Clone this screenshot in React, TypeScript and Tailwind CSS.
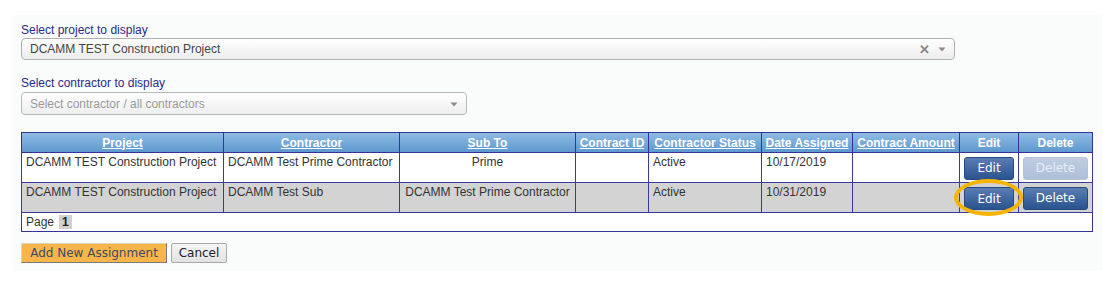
import React from "react";

const cols = [202, 176, 176, 73, 113, 91, 107, 59, 74];
const heads = [
  { t: "Project", u: true },
  { t: "Contractor", u: true },
  { t: "Sub To", u: true },
  { t: "Contract ID", u: true },
  { t: "Contractor Status", u: true },
  { t: "Date Assigned", u: true },
  { t: "Contract Amount", u: true },
  { t: "Edit", u: false },
  { t: "Delete", u: false },
];

function BlueBtn({ label, disabled, w }: { label: string; disabled?: boolean; w: string }) {
  return (
    <button
      className={
        disabled
          ? `${w} h-[23px] rounded-[3px] border border-[#b4c2d8] bg-gradient-to-b from-[#c0cde2] to-[#aebfd9] text-[#e8edf5] text-[12px] font-['DejaVu_Sans',sans-serif]`
          : `${w} h-[23px] rounded-[3px] border border-[#254a80] bg-gradient-to-b from-[#5a7db3] to-[#2a538f] text-white text-[12px] font-['DejaVu_Sans',sans-serif]`
      }
    >
      {label}
    </button>
  );
}

export default function App() {
  const cell = "border border-[#3a3a9a] align-top px-[4px] pt-[2px] text-[12px] leading-[14px] text-[#333]";
  return (
    <div className="w-[1117px] h-[299px] bg-white pt-[15px] pl-[13px] font-['Liberation_Sans',Arial,sans-serif]">
      <div className="w-[1089px] h-[256px] bg-[#fafbfb] pl-[8px] pt-[8px]">
        <div className="text-[12px] leading-[15px] text-[#2a2a8a]">Select project to display</div>
        <div className="w-[934px] h-[22px] rounded-[4px] border border-[#b0b0b0] bg-gradient-to-b from-[#ffffff] to-[#ececec] flex items-center pl-[8px] pr-[8px]">
          <span className="flex-1 text-[12px] text-[#444]">DCAMM TEST Construction Project</span>
          <span className="text-[#888] text-[13px] font-bold leading-none mr-[8px]">✕</span>
          <svg width="8" height="6" viewBox="0 0 8 6"><path d="M0.5 1.5 L7.5 1.5 L4 5.5 Z" fill="#888" /></svg>
        </div>
        <div className="text-[12px] leading-[15px] text-[#2a2a8a] mt-[16px]">Select contractor to display</div>
        <div className="mt-[1px] w-[446px] h-[23px] rounded-[4px] border border-[#b8b8b8] bg-gradient-to-b from-[#ffffff] to-[#eeeeee] flex items-center pl-[8px] pr-[8px]">
          <span className="flex-1 text-[12px] text-[#9a9a9a]">Select contractor / all contractors</span>
          <svg width="8" height="6" viewBox="0 0 8 6"><path d="M0.5 1.5 L7.5 1.5 L4 5.5 Z" fill="#888" /></svg>
        </div>

        <table className="mt-[17px] w-[1071px] table-fixed border-collapse border border-[#333399]">
          <colgroup>
            {cols.map((w, i) => (
              <col key={i} style={{ width: w }} />
            ))}
          </colgroup>
          <thead>
            <tr className="h-[20px] bg-gradient-to-b from-[#8fbce4] to-[#5b96cd]">
              {heads.map((h) => (
                <th
                  key={h.t}
                  className={`border border-[#333399] text-[12px] leading-[14px] font-bold text-white text-center whitespace-nowrap px-0 ${h.u ? "underline" : ""}`}
                >
                  {h.t}
                </th>
              ))}
            </tr>
          </thead>
          <tbody>
            <tr className="h-[30px] bg-white">
              <td className={cell + " whitespace-nowrap"}>DCAMM TEST Construction Project</td>
              <td className={cell + " whitespace-nowrap"}>DCAMM Test Prime Contractor</td>
              <td className={cell + " text-center"}>Prime</td>
              <td className={cell}></td>
              <td className={cell}>Active</td>
              <td className={cell}>10/17/2019</td>
              <td className={cell}></td>
              <td className="border border-[#3a3a9a] text-center align-middle">
                <BlueBtn label="Edit" w="w-[50px]" />
              </td>
              <td className="border border-[#3a3a9a] text-center align-middle">
                <BlueBtn label="Delete" w="w-[65px]" disabled />
              </td>
            </tr>
            <tr className="h-[30px] bg-[#d3d3d3]">
              <td className={cell + " whitespace-nowrap"}>DCAMM TEST Construction Project</td>
              <td className={cell + " whitespace-nowrap"}>DCAMM Test Sub</td>
              <td className={cell + " text-center whitespace-nowrap"}>DCAMM Test Prime Contractor</td>
              <td className={cell}></td>
              <td className={cell}>Active</td>
              <td className={cell}>10/31/2019</td>
              <td className={cell}></td>
              <td className="border border-[#3a3a9a] text-center align-middle">
                <span className="relative inline-block align-middle">
                  <BlueBtn label="Edit" w="w-[50px]" />
                  <span className="absolute left-[-10px] top-[-7px] w-[69px] h-[37px] rounded-[50%] border-[4px] border-[#f6b400] pointer-events-none" />
                </span>
              </td>
              <td className="border border-[#3a3a9a] text-center align-middle">
                <BlueBtn label="Delete" w="w-[65px]" />
              </td>
            </tr>
            <tr className="h-[19px] bg-white">
              <td colSpan={9} className="border border-[#333399] px-[4px] text-[12px] leading-[14px] text-[#333]">
                <span className="inline-flex items-center gap-[5px]">
                  Page
                  <span className="bg-[#d0d0d0] px-[3px] font-bold text-[#222]">1</span>
                </span>
              </td>
            </tr>
          </tbody>
        </table>

        <div className="mt-[11px] flex gap-[4px] font-['DejaVu_Sans',sans-serif] text-[12px]">
          <button className="h-[20px] w-[146px] bg-[#f8b64a] text-[#3d4a68] border border-t-[#e0d4b8] border-l-[#e0d4b8] border-r-[#7a7a7a] border-b-[#7a7a7a]">
            Add New Assignment
          </button>
          <button className="h-[20px] w-[56px] bg-gradient-to-b from-[#f6f6f6] to-[#e2e2e2] text-[#222] border border-[#a8a8a8] rounded-[2px]">
            Cancel
          </button>
        </div>
      </div>
    </div>
  );
}
